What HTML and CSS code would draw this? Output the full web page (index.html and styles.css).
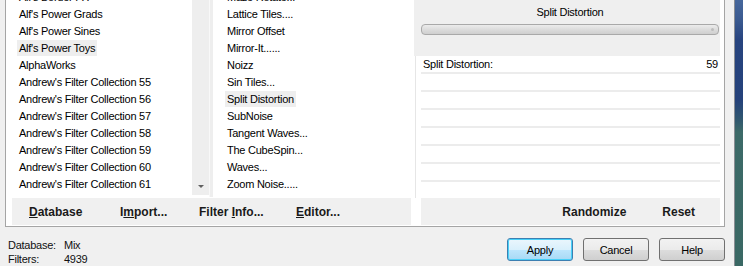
FILE: index.html
```html
<!DOCTYPE html>
<html>
<head>
<meta charset="utf-8">
<link rel="stylesheet" href="styles.css">
</head>
<body>
<div class="screen">
  <div class="window">
    <div class="group">
      <div class="left">
        <div class="lists">
          <ul class="list list-a">
            <li><span>Alf's Border FX</span></li>
            <li><span>Alf's Power Grads</span></li>
            <li><span>Alf's Power Sines</span></li>
            <li><span class="sel">Alf's Power Toys</span></li>
            <li><span>AlphaWorks</span></li>
            <li><span>Andrew's Filter Collection 55</span></li>
            <li><span>Andrew's Filter Collection 56</span></li>
            <li><span>Andrew's Filter Collection 57</span></li>
            <li><span>Andrew's Filter Collection 58</span></li>
            <li><span>Andrew's Filter Collection 59</span></li>
            <li><span>Andrew's Filter Collection 60</span></li>
            <li><span>Andrew's Filter Collection 61</span></li>
            <li><span>Andrew's Filter Collection 62</span></li>
          </ul>
          <div class="scrollbar"><div class="arrow-box"><span class="arrow"></span></div></div>
          <div class="splitter"></div>
          <ul class="list list-b">
            <li><span>Maze Rotate...</span></li>
            <li><span>Lattice Tiles....</span></li>
            <li><span>Mirror Offset</span></li>
            <li><span>Mirror-It......</span></li>
            <li><span>Noizz</span></li>
            <li><span>Sin Tiles...</span></li>
            <li><span class="sel">Split Distortion</span></li>
            <li><span>SubNoise</span></li>
            <li><span>Tangent Waves...</span></li>
            <li><span>The CubeSpin...</span></li>
            <li><span>Waves...</span></li>
            <li><span>Zoom Noise.....</span></li>
          </ul>
        </div>
        <div class="bar bar-left">
          <span><u>D</u>atabase</span>
          <span>I<u>m</u>port...</span>
          <span>Filter <u>I</u>nfo...</span>
          <span><u>E</u>ditor...</span>
        </div>
      </div>
      <div class="right">
        <div class="head">
          <div class="title">Split Distortion</div>
          <div class="slider"><span class="grip"></span></div>
        </div>
        <div class="rows">
          <div class="row"><span>Split Distortion:</span><span>59</span></div>
          <div class="row"></div>
          <div class="row"></div>
          <div class="row"></div>
          <div class="row"></div>
          <div class="row"></div>
          <div class="row"></div>
          <div class="row"></div>
        </div>
        <div class="bar bar-right">
          <span>Randomize</span>
          <span>Reset</span>
        </div>
      </div>
    </div>
    <div class="footer">
      <div class="status">
        <span>Database:</span><span>Mix</span>
        <span>Filters:</span><span>4939</span>
      </div>
      <div class="buttons">
        <button class="btn btn-default">Apply</button>
        <button class="btn">Cancel</button>
        <button class="btn">Help</button>
      </div>
    </div>
  </div>
  <div class="desktop"></div>
</div>
</body>
</html>
```
FILE: styles.css
```css
html, body {
  margin: 0;
  padding: 0;
  overflow: hidden;
}
body {
  font-family: "Liberation Sans", Arial, sans-serif;
  font-size: 11px;
  letter-spacing: -0.25px;
  color: #000;
}
.screen {
  display: flex;
  width: 743px;
  height: 266px;
  overflow: hidden;
}
.window {
  flex: 1;
  background: #f0f0f0;
  display: flex;
  flex-direction: column;
  min-width: 0;
}
.desktop {
  width: 8px;
  border-left: 1px solid #8a8e94;
  background: linear-gradient(#46679c 0, #3a5a90 20px, #27447f 40px, #25427b 100px, #2f5570 118px, #3c6a68 132px, #3a6864 266px);
}
.group {
  margin: -11px 9px 0 5px;
  height: 241px;
  border: 1px solid #a5a5a5;
  background: #fff;
  display: grid;
  grid-template-columns: 399px 306px;
  column-gap: 3px;
  padding: 0 4px 0 6px;
}
.left {
  display: flex;
  flex-direction: column;
}
.lists {
  height: 207px;
  display: flex;
  overflow: hidden;
  margin-bottom: 1px;
}
.list {
  list-style: none;
  margin: -1px 0 0 0;
  padding: 0;
  overflow: hidden;
}
.list li {
  height: 17px;
  white-space: nowrap;
}
.list span {
  display: inline-block;
  line-height: 16px;
  padding: 0 2px;
}
.list span.sel {
  background: #eeeeee;
}
.list-a {
  width: 175px;
  padding-left: 5px;
}
.list-b {
  flex: 1;
  padding-left: 12px;
}
.scrollbar {
  width: 17px;
  background: #eeeeee;
  display: flex;
  flex-direction: column;
  justify-content: flex-end;
  margin-bottom: 2px;
}
.arrow-box {
  height: 17px;
  display: flex;
  align-items: center;
  justify-content: center;
}
.arrow {
  width: 0;
  height: 0;
  border-left: 3px solid transparent;
  border-right: 3px solid transparent;
  border-top: 3px solid #606060;
}
.splitter {
  width: 3px;
  border-left: 1px solid #f8f8f8;
  background: #eeeeee;
}
.bar {
  height: 27px;
  background: #f0f0f0;
  display: flex;
  align-items: center;
  font-size: 12px;
  font-weight: bold;
  letter-spacing: 0;
  color: #1a1a1a;
}
.bar-left {
  width: 399px;
  display: grid;
  grid-template-columns: 91px 79px 97px auto;
  padding-left: 17px;
  box-sizing: border-box;
}
.right {
  display: flex;
  flex-direction: column;
}
.head {
  height: 66px;
  background: #efefef;
  display: flex;
  flex-direction: column;
  box-sizing: border-box;
  padding-top: 16px;
}
.title {
  text-align: center;
  line-height: 13px;
  padding-left: 6px;
}
.slider {
  margin: 5px 1px 0 7px;
  height: 9px;
  border: 1px solid #a9a9a9;
  border-radius: 4px;
  background: linear-gradient(#ececec, #dcdcdc 50%, #cfcfcf);
  display: flex;
  justify-content: flex-end;
  align-items: center;
  padding-right: 4px;
}
.grip {
  width: 3px;
  height: 3px;
  border-radius: 50%;
  background: #bdbdbd;
}
.rows {
  height: 142px;
  overflow: hidden;
  margin-left: 1px;
  border-left: 1px solid #e6e6e6;
}
.row {
  height: 16px;
  border-bottom: 2px solid #ececec;
  margin-left: 5px;
  display: flex;
  justify-content: space-between;
  align-items: center;
  padding: 0 2px;
}
.bar-right {
  margin-left: 7px;
  justify-content: flex-end;
  gap: 36px;
  padding-right: 25px;
}
.footer {
  margin-top: 11px;
  display: flex;
  align-items: flex-start;
  padding: 0 9px 0 8px;
}
.status {
  display: grid;
  grid-template-columns: 56px auto;
  line-height: 13.5px;
  padding-top: 1px;
  color: #111;
}
.buttons {
  margin-left: auto;
  display: flex;
  gap: 10px;
}
.btn {
  width: 66px;
  height: 23px;
  box-sizing: border-box;
  border: 1px solid #707070;
  border-radius: 3px;
  background: linear-gradient(#f2f2f2 0, #ebebeb 50%, #dddddd 51%, #cfcfcf 100%);
  font-family: "Liberation Sans", Arial, sans-serif;
  font-size: 11px;
  letter-spacing: -0.25px;
  color: #000;
  padding: 0;
}
.btn-default {
  border-color: #3c7fb1;
  background: linear-gradient(#eaf6fd 0, #d9f0fc 50%, #bee6fd 51%, #a7d9f5 100%);
  box-shadow: inset 0 0 0 1px #48d0f8;
}
```
